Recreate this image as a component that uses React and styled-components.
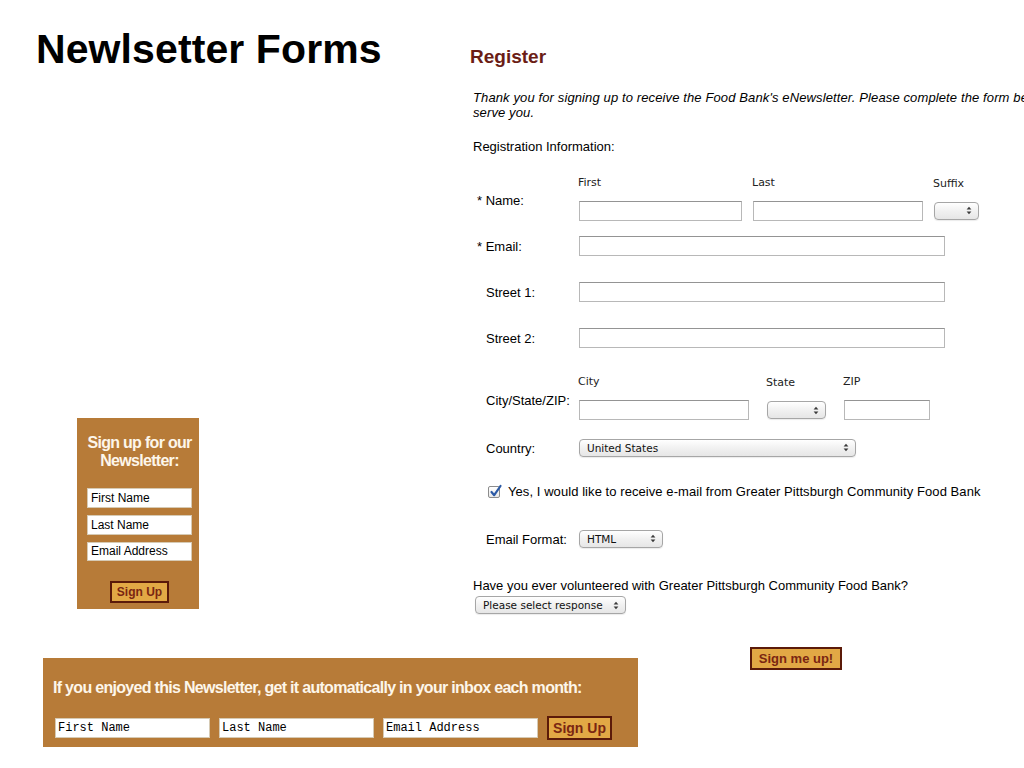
import styled, { createGlobalStyle } from "styled-components";

const GlobalStyle = createGlobalStyle`
  html, body {
    margin: 0;
    padding: 0;
    background: #fff;
  }
  body {
    font-family: "Liberation Sans", Arial, sans-serif;
    color: #000;
  }
`;

const Slide = styled.div`
  width: 1024px;
  height: 768px;
  overflow: hidden;
  display: flex;
  background: #fff;
`;

const LeftColumn = styled.div`
  flex: none;
  width: 470px;
  display: flex;
  flex-direction: column;
  align-items: flex-start;
`;

const Title = styled.h1`
  margin: 25px 0 0 36px;
  font-size: 41px;
  line-height: 48px;
  font-weight: 700;
  letter-spacing: 0.1px;
`;

const Widget = styled.div`
  flex: none;
  margin: 345px 0 0 77px;
  width: 122px;
  height: 191px;
  box-sizing: border-box;
  padding: 16px 7px 6px 10px;
  background: #b77b38;
  display: flex;
  flex-direction: column;
`;

const WidgetHeading = styled.div`
  color: #fdf6ea;
  font-weight: 700;
  font-size: 16px;
  line-height: 18px;
  letter-spacing: -0.7px;
  text-align: center;
  margin-bottom: 18px;
`;

const PlainInput = styled.input`
  box-sizing: border-box;
  height: 20px;
  width: ${(p) => p.$w}px;
  margin: 0 0 ${(p) => p.$mb || 0}px;
  padding: 0 ${(p) => (p.$mono ? 2 : 3)}px;
  border: 1px solid #d6cab4;
  background: #fff;
  font-family: ${(p) => (p.$mono ? '"Liberation Mono", "Courier New", monospace' : '"Liberation Sans", Arial, sans-serif')};
  font-size: 12px;
  color: #000;
  outline: none;
  &::placeholder {
    color: #000;
    opacity: 1;
  }
`;

const SignButton = styled.button`
  box-sizing: border-box;
  width: ${(p) => p.$w}px;
  height: ${(p) => p.$h}px;
  padding: 0;
  margin: ${(p) => p.$m || 0};
  align-self: ${(p) => p.$align || "auto"};
  font-family: "Liberation Sans", Arial, sans-serif;
  font-weight: 700;
  font-size: ${(p) => p.$fs}px;
  line-height: 1;
  color: #7a2612;
  background: #e2a845;
  border: 2px solid #5b1a09;
  border-radius: 0;
  cursor: pointer;
`;

const Bar = styled.div`
  flex: none;
  margin: 49px 0 0 43px;
  width: 595px;
  height: 89px;
  box-sizing: border-box;
  padding: 21px 10px 0;
  background: #b77b38;
`;

const BarText = styled.div`
  color: #fdf6ea;
  font-weight: 700;
  font-size: 16px;
  line-height: 18px;
  letter-spacing: -0.7px;
  white-space: nowrap;
`;

const BarRow = styled.div`
  display: flex;
  align-items: center;
  gap: 9px;
  margin-top: 19px;
  padding-left: 2px;
`;

const RightColumn = styled.div`
  flex: none;
  width: 700px;
  padding-top: 46px;
  box-sizing: border-box;
`;

const Heading = styled.h2`
  margin: 0;
  font-size: 19px;
  line-height: 22px;
  font-weight: 700;
  color: #6b1d16;
`;

const Intro = styled.p`
  margin: 22px 0 0 3px;
  width: 700px;
  font-style: italic;
  font-size: 13px;
  line-height: 15px;
  letter-spacing: 0.12px;
`;

const SectionLabel = styled.div`
  margin: 19px 0 0 3px;
  font-size: 13px;
  line-height: 16px;
`;

const Form = styled.div`
  margin: 18px 0 0 7px;
  display: flex;
  flex-direction: column;
`;

const Row = styled.div`
  display: flex;
  align-items: center;
  height: ${(p) => p.$h}px;
`;

const RowLabel = styled.div`
  flex: none;
  width: 102px;
  box-sizing: border-box;
  padding-left: ${(p) => (p.$star ? 0 : 9)}px;
  padding-top: ${(p) => (p.$sub ? 6 : 2)}px;
  font-size: 13px;
  line-height: 16px;
`;

const Fields = styled.div`
  display: flex;
  align-items: flex-end;
  gap: ${(p) => p.$gap || 0}px;
`;

const FieldGroup = styled.div`
  display: flex;
  flex-direction: column;
  align-items: flex-start;
`;

const SubLabel = styled.span`
  font-family: "DejaVu Sans", Verdana, sans-serif;
  font-size: 11px;
  line-height: 14px;
  margin: 0 0 11px -1px;
  color: #222;
`;

const TextInput = styled.input`
  box-sizing: border-box;
  width: ${(p) => p.$w}px;
  height: 20px;
  margin: 0;
  padding: 0 3px;
  border: 1px solid #b8b8b8;
  border-top-color: #949494;
  background: #fff;
  outline: none;
`;

const SelectBox = styled.div`
  box-sizing: border-box;
  width: ${(p) => p.$w}px;
  height: 18px;
  margin: ${(p) => p.$m || 0};
  padding: 0 6px 0 7px;
  display: flex;
  align-items: center;
  justify-content: space-between;
  border: 1px solid #a6a6a6;
  border-radius: 4px;
  background: linear-gradient(#ffffff, #f1f1f1 50%, #e6e6e6);
  box-shadow: 0 1px 1px rgba(0, 0, 0, 0.08);
  font-family: "DejaVu Sans", Verdana, sans-serif;
  font-size: 10.5px;
  color: #111;
  white-space: nowrap;
`;

const CheckRow = styled.label`
  display: flex;
  align-items: center;
  gap: 8px;
  margin-left: 11px;
  font-size: 13px;
  line-height: 16px;
  letter-spacing: 0.07px;
`;

const CheckBox = styled.span`
  position: relative;
  flex: none;
  width: 12px;
  height: 12px;
  box-sizing: border-box;
  border: 1px solid #8c8c8c;
  border-radius: 2px;
  background: linear-gradient(#fff, #e9e9e9);
  svg {
    position: absolute;
    left: 0px;
    top: -3px;
  }
`;

const Question = styled.div`
  margin: 24px 0 0 3px;
  font-size: 13px;
  line-height: 16px;
`;

const Arrows = () => (
  <svg width="6" height="9" viewBox="0 0 6 9">
    <path d="M3 0.8 L5.4 3.6 H0.6 Z M3 8.2 L5.4 5.4 H0.6 Z" fill="#3a3a3a" />
  </svg>
);

const Select = ({ w, m, children }) => (
  <SelectBox $w={w} $m={m}>
    <span>{children}</span>
    <Arrows />
  </SelectBox>
);

export default function App() {
  return (
    <>
      <GlobalStyle />
      <Slide>
        <LeftColumn>
          <Title>Newlsetter Forms</Title>

          <Widget>
            <WidgetHeading>
              Sign up for our
              <br />
              Newsletter:
            </WidgetHeading>
            <PlainInput $w={105} $mb={7} placeholder="First Name" />
            <PlainInput $w={105} $mb={7} placeholder="Last Name" />
            <PlainInput $w={105} $mb={7} placeholder="Email Address" />
            <SignButton $w={59} $h={22} $fs={12} $m="13px 0 0" $align="center">
              Sign Up
            </SignButton>
          </Widget>

          <Bar>
            <BarText>
              If you enjoyed this Newsletter, get it automatically in your inbox each month:
            </BarText>
            <BarRow>
              <PlainInput $w={155} $mono placeholder="First Name" />
              <PlainInput $w={155} $mono placeholder="Last Name" />
              <PlainInput $w={155} $mono placeholder="Email Address" />
              <SignButton $w={65} $h={24} $fs={14}>
                Sign Up
              </SignButton>
            </BarRow>
          </Bar>
        </LeftColumn>

        <RightColumn>
          <Heading>Register</Heading>
          <Intro>
            Thank you for signing up to receive the Food Bank's eNewsletter. Please complete the form below so we
            can better serve you.
          </Intro>
          <SectionLabel>Registration Information:</SectionLabel>

          <Form>
            <Row $h={50}>
              <RowLabel $star $sub>* Name:</RowLabel>
              <Fields $gap={11}>
                <FieldGroup>
                  <SubLabel>First</SubLabel>
                  <TextInput $w={163} />
                </FieldGroup>
                <FieldGroup>
                  <SubLabel>Last</SubLabel>
                  <TextInput $w={170} />
                </FieldGroup>
                <FieldGroup>
                  <SubLabel>Suffix</SubLabel>
                  <Select w={45} m="0 0 1px" />
                </FieldGroup>
              </Fields>
            </Row>

            <Row $h={46}>
              <RowLabel $star>* Email:</RowLabel>
              <TextInput $w={366} />
            </Row>

            <Row $h={46}>
              <RowLabel>Street 1:</RowLabel>
              <TextInput $w={366} />
            </Row>

            <Row $h={46}>
              <RowLabel>Street 2:</RowLabel>
              <TextInput $w={366} />
            </Row>

            <Row $h={73}>
              <RowLabel $sub>City/State/ZIP:</RowLabel>
              <Fields $gap={18}>
                <FieldGroup>
                  <SubLabel>City</SubLabel>
                  <TextInput $w={170} />
                </FieldGroup>
                <FieldGroup>
                  <SubLabel>State</SubLabel>
                  <Select w={59} m="0 0 1px" />
                </FieldGroup>
                <FieldGroup>
                  <SubLabel>ZIP</SubLabel>
                  <TextInput $w={86} />
                </FieldGroup>
              </Fields>
            </Row>

            <Row $h={27}>
              <RowLabel>Country:</RowLabel>
              <Select w={277}>United States</Select>
            </Row>

            <Row $h={62}>
              <CheckRow>
                <CheckBox>
                  <svg width="14" height="14" viewBox="0 0 14 14">
                    <path d="M2.5 8 L5.2 11.2 L11.5 2" stroke="#2c5aa6" strokeWidth="2.2" fill="none" strokeLinecap="round" strokeLinejoin="round" />
                  </svg>
                </CheckBox>
                Yes, I would like to receive e-mail from Greater Pittsburgh Community Food Bank
              </CheckRow>
            </Row>

            <Row $h={31}>
              <RowLabel>Email Format:</RowLabel>
              <Select w={84}>HTML</Select>
            </Row>
          </Form>

          <Question>Have you ever volunteered with Greater Pittsburgh Community Food Bank?</Question>
          <Select w={151} m="2px 0 0 5px">Please select response</Select>

          <SignButton $w={92} $h={23} $fs={13} $m="33px 0 0 280px">
            Sign me up!
          </SignButton>
        </RightColumn>
      </Slide>
    </>
  );
}
